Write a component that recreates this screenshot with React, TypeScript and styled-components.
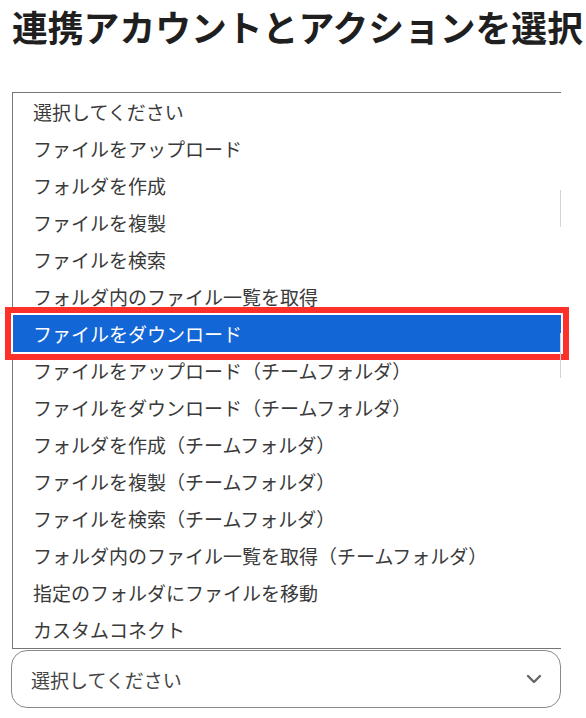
import React from "react";
import styled, { createGlobalStyle } from "styled-components";

const Global = createGlobalStyle`
  html, body { margin: 0; padding: 0; background: #ffffff; }
  body { font-family: "Noto Sans CJK JP", "Noto Sans", sans-serif; }
`;

const Page = styled.div`
  position: relative;
  width: 586px;
  height: 718px;
  overflow: hidden;
  padding-left: 12px;
  box-sizing: border-box;
`;

const Title = styled.h1`
  margin: 0;
  padding-top: 2px;
  font-size: 35.8px;
  line-height: 48px;
  font-weight: 700;
  color: #1f1f1f;
  white-space: nowrap;
  letter-spacing: 0;
`;

const List = styled.ul`
  list-style: none;
  margin: 42px 0 0 0;
  padding: 0;
  width: 548px;
  border-top: 1px solid #767676;
  border-left: 1px solid #767676;
  border-bottom: 1px solid #767676;
  background: #fff;
  position: relative;
  z-index: 2;
`;

const Item = styled.li<{ $active?: boolean }>`
  height: 37px;
  display: flex;
  align-items: center;
  padding-left: 20px;
  font-size: 19px;
  color: ${(p) => (p.$active ? "#ffffff" : "#3a3a3a")};
  background: ${(p) => (p.$active ? "#1366d6" : "transparent")};
  box-shadow: ${(p) =>
    p.$active ? "0 0 0 2px #ffffff, 0 0 0 8px #fd3129" : "none"};
  white-space: nowrap;
`;

const Select = styled.div`
  margin: 1px 0 0 -1px;
  width: 550px;
  height: 58px;
  box-sizing: border-box;
  border: 1px solid #8a8a8a;
  border-radius: 16px;
  display: flex;
  align-items: center;
  justify-content: space-between;
  padding: 0 18px 0 19px;
  font-size: 19px;
  color: #444;
`;

const Ghost = styled.div<{ $top: number; $h: number }>`
  position: absolute;
  left: 560px;
  top: ${(p) => p.$top}px;
  width: 1px;
  height: ${(p) => p.$h}px;
  background: #cfd3dc;
  z-index: 3;
`;

const items = [
  "選択してください",
  "ファイルをアップロード",
  "フォルダを作成",
  "ファイルを複製",
  "ファイルを検索",
  "フォルダ内のファイル一覧を取得",
  "ファイルをダウンロード",
  "ファイルをアップロード（チームフォルダ）",
  "ファイルをダウンロード（チームフォルダ）",
  "フォルダを作成（チームフォルダ）",
  "ファイルを複製（チームフォルダ）",
  "ファイルを検索（チームフォルダ）",
  "フォルダ内のファイル一覧を取得（チームフォルダ）",
  "指定のフォルダにファイルを移動",
  "カスタムコネクト",
];

export default function App() {
  return (
    <>
      <Global />
      <Page>
        <Title>連携アカウントとアクションを選択</Title>
        <List>
          {items.map((t, i) => (
            <Item key={i} $active={i === 6}>
              {t}
            </Item>
          ))}
        </List>
        <Select>
          <span>選択してください</span>
          <svg width="16" height="10" viewBox="0 0 16 10" fill="none">
            <path
              d="M2 2 L8 8 L14 2"
              stroke="#666"
              strokeWidth="2.4"
              strokeLinecap="round"
              strokeLinejoin="round"
            />
          </svg>
        </Select>
        <Ghost $top={190} $h={37} />
        <Ghost $top={333} $h={45} />
      </Page>
    </>
  );
}
